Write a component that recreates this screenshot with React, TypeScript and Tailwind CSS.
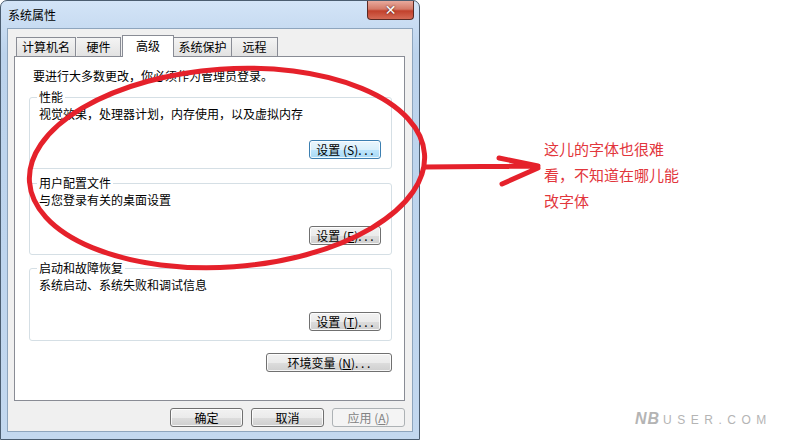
import React from "react";

const F = "[font-family:'Noto_Sans_CJK_SC','Noto_Sans_CJK_JP',sans-serif]";

function Btn({ children, w, kind = "normal" }: { children: React.ReactNode; w: string; kind?: "normal" | "default" | "disabled" }) {
  const base = "h-[19px] rounded-[3px] border text-[12px] leading-none flex items-center justify-center whitespace-pre shadow-[inset_0_0_0_1px_rgba(255,255,255,0.8)] " + w;
  const cls =
    kind === "default"
      ? "border-[#3c7fb1] bg-[linear-gradient(#eaf6fd_0%,#d9f0fc_50%,#bee6fd_51%,#a7d9f5_100%)] text-black"
      : kind === "disabled"
      ? "border-[#adb2b5] bg-[#f4f4f4] text-[#838383] shadow-none"
      : "border-[#707070] bg-[linear-gradient(#f2f2f2_0%,#ebebeb_50%,#dddddd_51%,#cfcfcf_100%)] text-black";
  return <div className={base + " " + cls}>{children}</div>;
}

function Group({ title, text, btn, h }: { title: string; text: string; btn: React.ReactNode; h: string }) {
  return (
    <fieldset className={"border border-[#d5dfe5] rounded-[3px] w-[363px] flex flex-col " + h}>
      <legend className="ml-[7px] px-[2px] text-[12px] leading-[12px]">{title}</legend>
      <div className="pl-[9px] mt-[3px] text-[12px] leading-[16px]">{text}</div>
      <div className="mt-auto mb-[9px] mr-[10px] flex justify-end">{btn}</div>
    </fieldset>
  );
}

export default function App() {
  return (
    <div className={"relative w-[789px] h-[442px] bg-white overflow-hidden flex text-black " + F}>
      {/* Window */}
      <div className="w-[420px] h-[440px] rounded-t-[7px] border border-[#4b5d70] bg-[linear-gradient(180deg,#d3e4f7_0%,#bcd3ec_12%,#bed5ee_60%,#c3d8ef_100%)] flex flex-col shrink-0">
        <div className="h-[27px] flex justify-between items-start">
          <div className="pl-[7px] pt-[7px] text-[12px] leading-[14px]">系统属性</div>
          <div className="mr-[5px] w-[47px] h-[19px] rounded-b-[4px] border border-t-0 border-[#5a2a24] bg-[linear-gradient(180deg,#e8a99c_0%,#d47a68_45%,#c2412c_55%,#d56a55_100%)] flex items-center justify-center text-white text-[14px] leading-none font-bold [font-family:'DejaVu_Sans',sans-serif] [text-shadow:0_0_2px_#3a1410]">
            ✕
          </div>
        </div>
        <div className="ml-[6px] w-[406px] h-[404px] border border-[#8ea5bd] bg-[#f0f0f0] pl-[6px] pt-[6px] flex flex-col">
          {/* Tabs */}
          <div className="h-[21px] flex items-end pl-[2px] text-[12px]">
            <div className="w-[60px] h-[19px] border border-b-0 border-[#898c95] bg-[linear-gradient(#f4f4f4,#e2e2e2)] flex items-center justify-center leading-none">计算机名</div>
            <div className="ml-[1px] w-[44px] h-[19px] border border-b-0 border-l-0 border-[#898c95] bg-[linear-gradient(#f4f4f4,#e2e2e2)] flex items-center justify-center leading-none">硬件</div>
            <div className="relative z-10 ml-[1px] mb-[-1px] w-[52px] h-[22px] border border-b-0 border-[#898c95] bg-white flex items-center justify-center leading-none pb-[2px]">高级</div>
            <div className="w-[58px] h-[19px] border border-b-0 border-l-0 border-[#898c95] bg-[linear-gradient(#f4f4f4,#e2e2e2)] flex items-center justify-center leading-none">系统保护</div>
            <div className="w-[46px] h-[19px] border border-b-0 border-l-0 border-[#898c95] bg-[linear-gradient(#f4f4f4,#e2e2e2)] flex items-center justify-center leading-none">远程</div>
          </div>
          {/* Panel */}
          <div className="w-[391px] h-[345px] border border-[#898c95] bg-white pl-[14px] flex flex-col">
            <div className="mt-[11px] pl-[4px] text-[12px] leading-[16px]">要进行大多数更改，你必须作为管理员登录。</div>
            <div className="mt-[7px]">
              <Group title="性能" text="视觉效果，处理器计划，内存使用，以及虚拟内存" h="h-[78px]" btn={<Btn w="w-[72px]" kind="default">设置 (S). . .</Btn>} />
            </div>
            <div className="mt-[8px]">
              <Group title="用户配置文件" text="与您登录有关的桌面设置" h="h-[78px]" btn={<Btn w="w-[72px]">设置 (<u>E</u>). . .</Btn>} />
            </div>
            <div className="mt-[7px]">
              <Group title="启动和故障恢复" text="系统启动、系统失败和调试信息" h="h-[79px]" btn={<Btn w="w-[72px]">设置 (<u>T</u>). . .</Btn>} />
            </div>
            <div className="mt-[12px] mr-[12px] flex justify-end">
              <Btn w="w-[126px]">环境变量 (<u>N</u>). . .</Btn>
            </div>
          </div>
          <div className="mt-[7px] mr-[7px] flex justify-end gap-[8px]">
            <Btn w="w-[73px]">确定</Btn>
            <Btn w="w-[73px]">取消</Btn>
            <Btn w="w-[73px]" kind="disabled">应用 (<u>A</u>)</Btn>
          </div>
        </div>
      </div>

      {/* Annotation column */}
      <div className="flex-1 flex flex-col">
        <div className="pl-[124px] pt-[136px] text-[15px] leading-[26px] text-[#e2363c]">
          <div>这儿的字体也很难</div>
          <div>看，不知道在哪儿能</div>
          <div>改字体</div>
        </div>
        <div className="mt-auto pl-[215px] pb-[15px] flex items-baseline text-[#b4b4b4] [font-family:'Liberation_Sans',sans-serif]">
          <span className="italic font-bold text-[16px] leading-none tracking-[1px]">NB</span>
          <span className="ml-[3px] text-[12px] leading-none tracking-[5.5px]">USER.COM</span>
        </div>
      </div>

      {/* Red marker overlay */}
      <svg className="absolute inset-0 pointer-events-none" width="789" height="442" viewBox="0 0 789 442">
        <ellipse cx="227" cy="168" rx="198" ry="99" transform="rotate(-4 227 168)" fill="none" stroke="#e5212b" strokeWidth="5" />
        <path d="M425 167 L538 166 M499 158 L538 166 M502 184 L538 168" fill="none" stroke="#e5212b" strokeWidth="5" strokeLinecap="round" strokeLinejoin="round" />
      </svg>
    </div>
  );
}
